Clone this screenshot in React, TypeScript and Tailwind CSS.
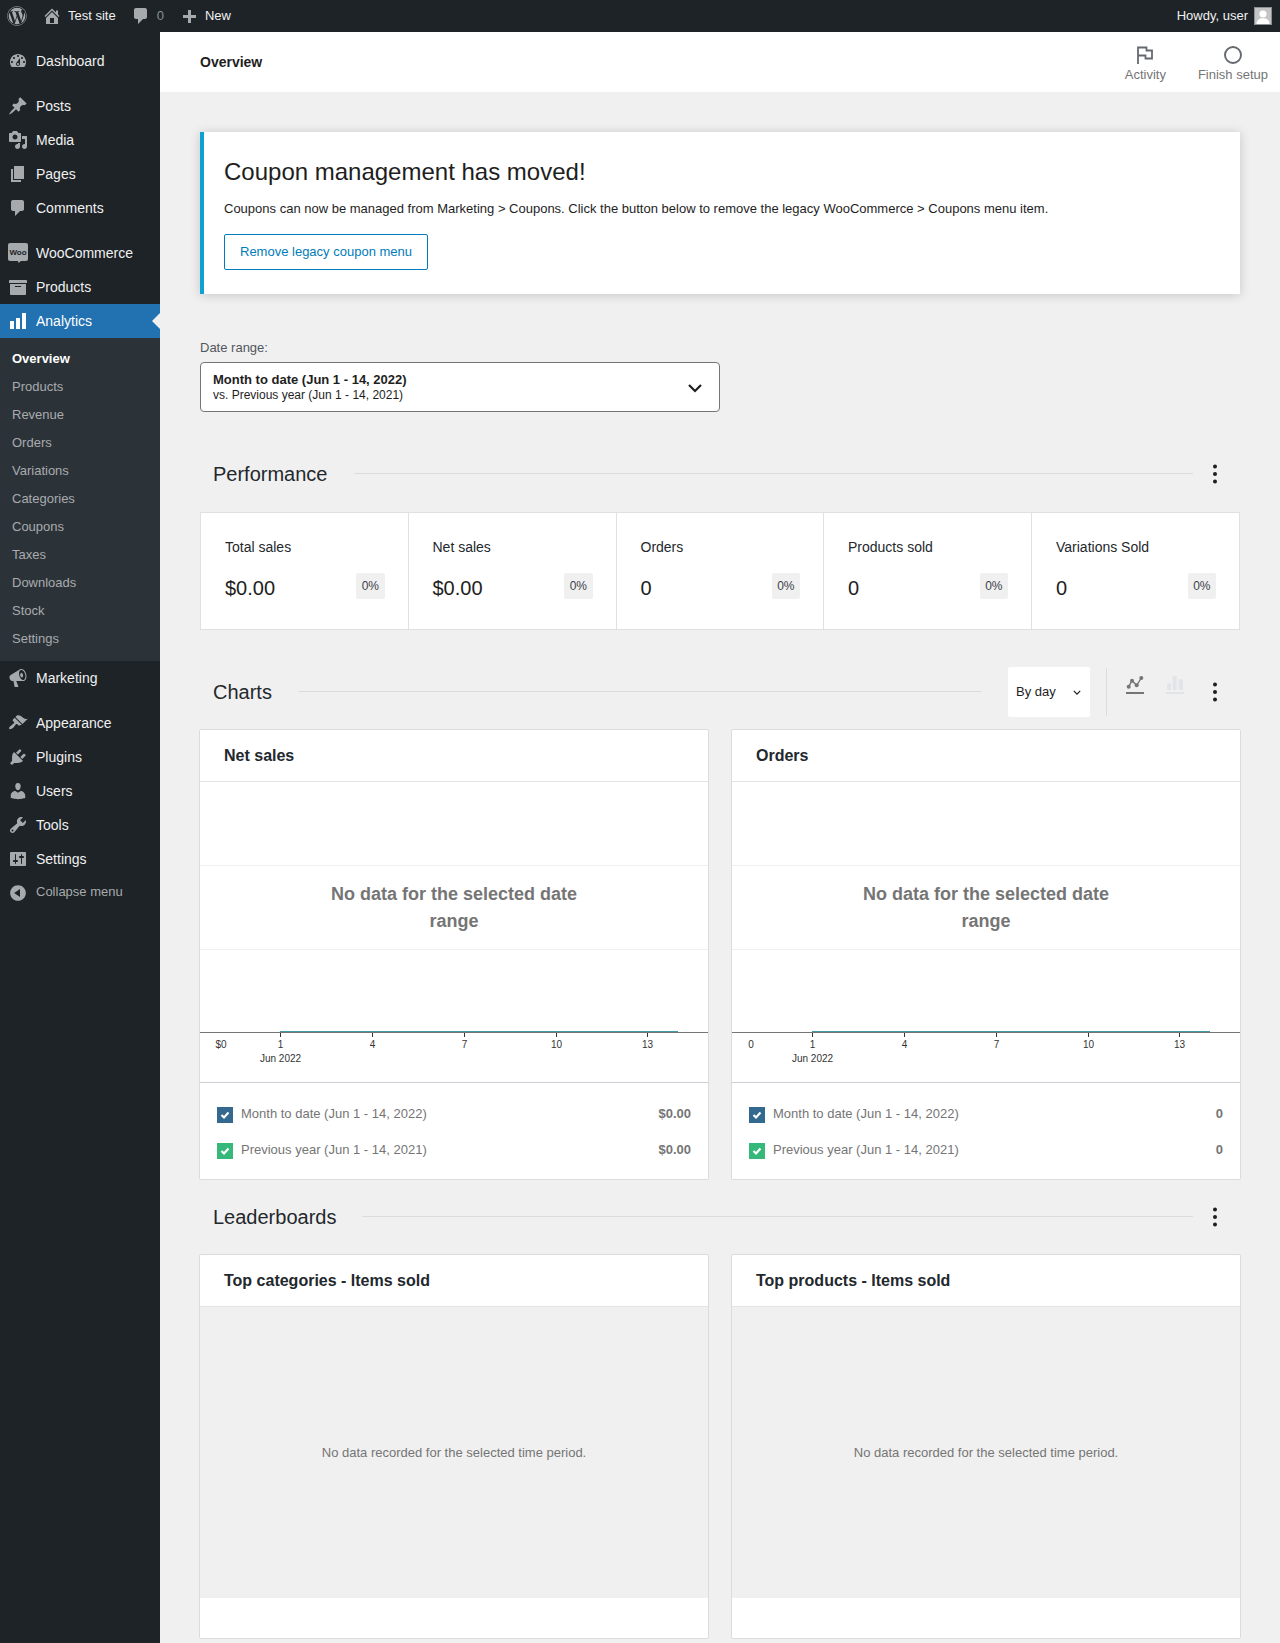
import React from "react";
import { FaWordpress } from "react-icons/fa";

const P: Record<string, string> = {
  dashboard: "M3.76 16h12.48c1.1-1.37 1.76-3.11 1.76-5 0-4.42-3.58-8-8-8s-8 3.58-8 8c0 1.89.66 3.63 1.76 5zM10 4c.55 0 1 .45 1 1s-.45 1-1 1-1-.45-1-1 .45-1 1-1zM6 6c.55 0 1 .45 1 1s-.45 1-1 1-1-.45-1-1 .45-1 1-1zm8 0c.55 0 1 .45 1 1s-.45 1-1 1-1-.45-1-1 .45-1 1-1zm-5.37 5.55L12 7v6c0 1.1-.9 2-2 2s-2-.9-2-2c0-.57.24-1.08.63-1.45zM4 10c.55 0 1 .45 1 1s-.45 1-1 1-1-.45-1-1 .45-1 1-1zm12 0c.55 0 1 .45 1 1s-.45 1-1 1-1-.45-1-1 .45-1 1-1zm-5 3c0-.55-.45-1-1-1s-1 .45-1 1 .45 1 1 1 1-.45 1-1z",
  post: "M10.44 3.02l1.82-1.82 6.36 6.35-1.83 1.82c-1.05-.68-2.48-.57-3.41.36l-.75.75c-.92.93-1.04 2.35-.35 3.41l-1.83 1.82-2.41-2.41-2.8 2.79c-.42.42-3.38 2.71-3.8 2.29s1.86-3.39 2.28-3.81l2.79-2.79L4.1 9.36l1.83-1.82c1.05.69 2.48.57 3.4-.36l.75-.75c.93-.92 1.05-2.35.36-3.41z",
  media: "M13 11V4c0-.55-.45-1-1-1h-1.67L9 1H5L3.67 3H2c-.55 0-1 .45-1 1v7c0 .55.45 1 1 1h10c.55 0 1-.45 1-1zM7 4.5c1.38 0 2.5 1.12 2.5 2.5S8.38 9.5 7 9.5 4.5 8.38 4.5 7 5.62 4.5 7 4.5zM14 6h5v10.5c0 1.38-1.12 2.5-2.5 2.5S14 17.88 14 16.5s1.12-2.5 2.5-2.5c.17 0 .34.02.5.05V9h-3V6zm-4 8.05V13h2v3.5c0 1.38-1.12 2.5-2.5 2.5S7 17.88 7 16.5 8.12 14 9.5 14c.17 0 .34.02.5.05z",
  page: "M6 15V2h10v13H6zm-1 1h8v2H3V5h2v11z",
  comment: "M5 2h9c1.1 0 2 .9 2 2v7c0 1.1-.9 2-2 2h-2l-5 5v-5H5c-1.1 0-2-.9-2-2V4c0-1.1.9-2 2-2z",
  archive: "M19 4v2H1V4c0-.55.45-1 1-1h16c.55 0 1 .45 1 1zM2 7h16v10c0 .55-.45 1-1 1H3c-.55 0-1-.45-1-1V7zm11 3V9H7v1h6z",
  bars: "M18 18V2h-4v16h4zm-6 0V7H8v11h4zm-6 0v-8H2v8h4z",
  megaphone: "M18.15 5.94c.46 1.62.38 3.22-.02 4.48-.42 1.28-1.26 2.18-2.3 2.48-.16.06-.26.06-.4.06-.06.02-.12.02-.18.02-.06.02-.14.02-.22.02h-6.8l2.22 5.5c.02.14-.06.26-.14.34-.08.1-.24.16-.34.16H6.95c-.1 0-.26-.06-.34-.16-.08-.08-.16-.2-.14-.34l-1-5.5H4.25l-.02-.02c-.5.06-1.08-.18-1.54-.62s-.88-1.08-1.06-1.88c-.24-.8-.2-1.56-.02-2.2.18-.62.58-1.08 1.06-1.3l.02-.02 9-5.4c.1-.06.18-.1.24-.16.06-.04.14-.08.24-.12.16-.08.28-.12.5-.18 1.04-.3 2.24.1 3.22 1 .98.88 1.8 2.24 2.26 3.86zm-2.58 5.98h-.02c.4-.1.74-.34 1.04-.7.58-.7.86-1.76.86-3.04 0-.64-.1-1.3-.28-1.98-.34-1.36-1.02-2.5-1.78-3.24s-1.68-1.1-2.46-.88c-.82.22-1.4.96-1.7 2-.32 1.04-.28 2.36.06 3.72.38 1.36 1 2.5 1.8 3.24.78.74 1.62 1.1 2.48.88zm-2.54-7.08c.22-.04.42-.02.62.04.38.16.76.48 1.02 1s.42 1.2.42 1.78c0 .3-.04.56-.12.8-.18.48-.44.84-.86.94-.34.1-.8-.06-1.14-.4-.28-.28-.52-.7-.66-1.2-.16-.5-.2-1-.14-1.44.08-.44.28-.82.58-1.1.1-.1.18-.16.28-.22.02-.02.06-.02.1-.04z",
  appearance: "M14.48 11.06L7.41 3.99l1.5-1.5c.5-.56 2.3-.47 3.51.32 1.21.8 1.43 1.28 2.91 2.1 1.18.64 2.45 1.26 4.45.85zm-.71.71L6.7 4.7 4.93 6.47c-.39.39-.39 1.02 0 1.41l1.06 1.06c.39.39.39 1.03 0 1.42-.6.6-1.43 1.11-2.21 1.69-.35.26-.7.53-1.01.84C1.43 13.23.78 15.5 1.29 16.01c.51.51 2.79-.14 4.13-1.49.31-.31.58-.66.84-1.01.58-.78 1.09-1.61 1.69-2.21.39-.39 1.02-.39 1.41 0l1.06 1.06c.39.39 1.02.39 1.41 0z",
  plugins: "M13.11 4.36L9.87 7.6 8 5.73l3.24-3.24c.35-.34 1.05-.2 1.56.32.52.51.66 1.21.31 1.55zm-8 1.77l.91-1.12 9.01 9.01-1.19.84c-.71.71-2.63 1.16-3.82 1.16H6.14L4.9 17.26c-.59.59-1.54.59-2.12 0-.59-.58-.59-1.53 0-2.12l1.24-1.24v-3.88c0-1.13.4-3.19 1.09-3.89zm7.26 3.97l3.24-3.24c.34-.35 1.04-.21 1.55.31.52.51.66 1.21.31 1.55l-3.24 3.25z",
  users: "M10 9.25c-2.27 0-2.73-3.44-2.73-3.44C7 4.02 7.82 2 9.97 2c2.16 0 2.98 2.02 2.71 3.81 0 0-.41 3.44-2.68 3.44zm0 2.57L12.72 10c2.39 0 4.52 2.33 4.52 4.53v2.49s-3.65 1.13-7.24 1.13c-3.65 0-7.24-1.13-7.24-1.13v-2.49c0-2.25 1.94-4.48 4.47-4.48z",
  tools: "M16.68 9.77c-1.34 1.34-3.3 1.67-4.95.99l-5.41 6.52c-.99.99-2.59.99-3.58 0s-.99-2.59 0-3.57l6.52-5.42c-.68-1.65-.35-3.61.99-4.95 1.28-1.28 3.12-1.62 4.72-1.06l-2.89 2.89 2.82 2.82 2.86-2.87c.53 1.58.18 3.39-1.08 4.65zM3.81 16.21c.4.39 1.04.39 1.43 0 .4-.4.4-1.04 0-1.43-.39-.4-1.03-.4-1.43 0-.39.39-.39 1.03 0 1.43z",
  settings: "M18 16V4c0-.55-.45-1-1-1H3c-.55 0-1 .45-1 1v12c0 .55.45 1 1 1h14c.55 0 1-.45 1-1zM8 11h1c.55 0 1 .45 1 1s-.45 1-1 1H8v1.5c0 .28-.22.5-.5.5s-.5-.22-.5-.5V13H6c-.55 0-1-.45-1-1s.45-1 1-1h1V5.5c0-.28.22-.5.5-.5s.5.22.5.5V11zm5-2h-1c-.55 0-1-.45-1-1s.45-1 1-1h1V5.5c0-.28.22-.5.5-.5s.5.22.5.5V7h1c.55 0 1 .45 1 1s-.45 1-1 1h-1v5.5c0 .28-.22.5-.5.5s-.5-.22-.5-.5V9z",
  collapse: "M10 2.16c4.33 0 7.84 3.51 7.84 7.84s-3.51 7.84-7.84 7.84S2.16 14.33 2.16 10 5.71 2.16 10 2.16zm2 11.72V6.12L6.18 9.97z",
  home: "M16 8.5l1.53 1.53-1.06 1.06L10 4.62l-6.47 6.47-1.06-1.06L10 2.5l4 4v-2h2v4zm-6-2.46l6 5.99V18H4v-5.97zM12 17v-5H8v5h4z",
  plus: "M17 7v3h-5v5H9v-5H4V7h5V2h3v5h5z",
};

function Dash({ name, className }: { name: string; className?: string }) {
  return (
    <svg viewBox="0 0 20 20" width={20} height={20} fill="currentColor" className={className}>
      <path d={P[name]} />
    </svg>
  );
}

function WooIcon() {
  return (
    <svg viewBox="0 0 20 20" width={20} height={20}>
      <path d="M2 0h16a2 2 0 0 1 2 2v14a2 2 0 0 1-2 2h-5l-2.5 2-.5-2H2a2 2 0 0 1-2-2V2a2 2 0 0 1 2-2z" fill="#a7aaad" />
      <text x="10" y="11.5" textAnchor="middle" fontSize="8" fontWeight="700" fill="#1d2327" fontFamily="Liberation Sans">Woo</text>
    </svg>
  );
}

function MenuItem({ icon, label, active }: { icon: React.ReactNode; label: string; active?: boolean }) {
  return (
    <div className={`relative flex h-[34px] items-center text-[14px] ${active ? "bg-[#2271b1] text-white" : "text-[#f0f0f1]"}`}>
      <span className={`flex w-[36px] shrink-0 justify-center ${active ? "text-white" : "text-[#a7aaad]"}`}>{icon}</span>
      <span>{label}</span>
      {active && (
        <span className="absolute right-0 top-1/2 h-0 w-0 -translate-y-1/2 border-y-[8px] border-r-[8px] border-y-transparent border-r-[#f0f0f0]" />
      )}
    </div>
  );
}

const subItems = ["Products", "Revenue", "Orders", "Variations", "Categories", "Coupons", "Taxes", "Downloads", "Stock", "Settings"];

function Sidebar() {
  return (
    <aside className="w-[160px] shrink-0 bg-[#1d2327] pt-[12px]">
      <MenuItem icon={<Dash name="dashboard" />} label="Dashboard" />
      <div className="h-[11px]" />
      <MenuItem icon={<Dash name="post" />} label="Posts" />
      <MenuItem icon={<Dash name="media" />} label="Media" />
      <MenuItem icon={<Dash name="page" />} label="Pages" />
      <MenuItem icon={<Dash name="comment" />} label="Comments" />
      <div className="h-[11px]" />
      <MenuItem icon={<WooIcon />} label="WooCommerce" />
      <MenuItem icon={<Dash name="archive" />} label="Products" />
      <MenuItem icon={<Dash name="bars" />} label="Analytics" active />
      <div className="bg-[#2c3338] pb-[8px] pt-[7px] text-[13px]">
        <div className="flex h-[28px] items-center pl-[12px] font-bold text-white">Overview</div>
        {subItems.map((s) => (
          <div key={s} className="flex h-[28px] items-center pl-[12px] text-[#a8abaf]">
            {s}
          </div>
        ))}
      </div>
      <MenuItem icon={<Dash name="megaphone" />} label="Marketing" />
      <div className="h-[11px]" />
      <MenuItem icon={<Dash name="appearance" />} label="Appearance" />
      <MenuItem icon={<Dash name="plugins" />} label="Plugins" />
      <MenuItem icon={<Dash name="users" />} label="Users" />
      <MenuItem icon={<Dash name="tools" />} label="Tools" />
      <MenuItem icon={<Dash name="settings" />} label="Settings" />
      <div className="flex h-[32px] items-center text-[13px] text-[#a7aaad]">
        <span className="flex w-[36px] shrink-0 justify-center pt-[2px]">
          <Dash name="collapse" />
        </span>
        <span>Collapse menu</span>
      </div>
    </aside>
  );
}

function TopBar() {
  return (
    <header className="flex h-[32px] items-center bg-[#1d2327] text-[13px] text-[#f0f0f1]">
      <FaWordpress className="ml-[7px] text-[#a7aaad]" size={20} />
      <Dash name="home" className="ml-[15px] text-[#a7aaad]" />
      <span className="ml-[6px]">Test site</span>
      <Dash name="comment" className="ml-[15px] text-[#a7aaad]" />
      <span className="ml-[6px] text-[#8c8f94]">0</span>
      <Dash name="plus" className="ml-[15px] mt-[3px] text-[#a7aaad]" />
      <span className="ml-[6px]">New</span>
      <span className="ml-auto">Howdy, user</span>
      <span className="ml-[6px] mr-[8px] flex h-[18px] w-[18px] items-end justify-center overflow-hidden border border-[#8c8f94] bg-[#c4c4c4]">
        <svg viewBox="0 0 16 16" width={16} height={16} fill="#fff">
          <circle cx="8" cy="6" r="3.6" />
          <path d="M1.5 16c0-4 2.6-5.8 6.5-5.8s6.5 1.8 6.5 5.8z" />
        </svg>
      </span>
    </header>
  );
}

function Kebab({ className }: { className?: string }) {
  return (
    <svg viewBox="0 0 20 20" width={20} height={20} fill="#1e1e1e" className={className}>
      <circle cx="10" cy="2.4" r="2" />
      <circle cx="10" cy="10" r="2" />
      <circle cx="10" cy="17.6" r="2" />
    </svg>
  );
}

function SectionHead({ title }: { title: string }) {
  return (
    <div className="flex h-[40px] items-center pl-[13px]">
      <h2 className="text-[20px] font-normal text-[#23282d]">{title}</h2>
      <div className="ml-[26px] mt-[-1px] h-[1px] flex-1 bg-[#dcdcde]" />
      <Kebab className="ml-[12px] mr-[15px]" />
    </div>
  );
}

function Stat({ label, value, last }: { label: string; value: string; last?: boolean }) {
  return (
    <div className={`h-[116px] pl-[24px] pr-[23px] pt-[24px] ${last ? "" : "border-r border-[#e0e0e0]"}`}>
      <div className="flex h-[20px] items-center text-[14px] text-[#23282d]">{label}</div>
      <div className="mt-[16px] flex h-[26px] items-center justify-between">
        <span className="mt-[3px] text-[20px] text-[#1e1e1e]">{value}</span>
        <span className="flex h-[26px] items-center rounded-[2px] bg-[#f0f0f0] px-[5.5px] text-[12px] text-[#3c434a]">0%</span>
      </div>
    </div>
  );
}

const ticks: [number, string][] = [
  [80.5, "1"],
  [172.5, "4"],
  [264.5, "7"],
  [356.5, "10"],
  [447.5, "13"],
];

function ChartDrawing({ yLabel, yX }: { yLabel: string; yX: number }) {
  return (
    <svg width="508" height="300" viewBox="0 0 508 300" className="block" fontFamily="Liberation Sans" fontSize="10" fill="#333">
      <line x1="0" x2="508" y1="83.5" y2="83.5" stroke="#efefef" />
      <line x1="0" x2="508" y1="167.5" y2="167.5" stroke="#efefef" />
      <line x1="80" x2="478" y1="249.5" y2="249.5" stroke="#3f9aa8" />
      <line x1="0" x2="508" y1="250.5" y2="250.5" stroke="#757575" />
      {ticks.map(([x, t]) => (
        <g key={t}>
          <line x1={x} x2={x} y1="251" y2="255" stroke="#333" />
          <text x={x} y="265.5" textAnchor="middle">{t}</text>
        </g>
      ))}
      <text x={yX} y="265.5" textAnchor="middle">{yLabel}</text>
      <text x="80.5" y="279.5" textAnchor="middle">Jun 2022</text>
    </svg>
  );
}

function Check({ color }: { color: string }) {
  return (
    <span className="flex h-[16px] w-[16px] items-center justify-center" style={{ backgroundColor: color }}>
      <svg viewBox="0 0 16 16" width={16} height={16} fill="none" stroke="#fff" strokeWidth="2.2">
        <path d="M4.5 8l2.5 2.5 4.5-5" />
      </svg>
    </span>
  );
}

function ChartCard({ title, yLabel, yX, val }: { title: string; yLabel: string; yX: number; val: string }) {
  return (
    <div className="h-[451px] rounded-[2px] border border-[#dcdcde] bg-white">
      <div className="flex h-[52px] items-center border-b border-[#e2e4e7] pl-[24px] text-[16px] font-bold text-[#23282d]">{title}</div>
      <div className="relative h-[300px]">
        <ChartDrawing yLabel={yLabel} yX={yX} />
        <div className="absolute left-0 right-0 top-[99px] text-center text-[18px] font-bold leading-[27px] text-[#757575]">
          No data for the selected date
          <br />
          range
        </div>
      </div>
      <div className="h-[97px] border-t border-[#ccd0d4] px-[17px] pt-[14px] text-[13px] text-[#757575]">
        {[
          ["#33688f", "Month to date (Jun 1 - 14, 2022)"],
          ["#37b87b", "Previous year (Jun 1 - 14, 2021)"],
        ].map(([c, t]) => (
          <div key={t} className="flex h-[36px] items-center">
            <Check color={c} />
            <span className="mb-[3px] ml-[8px]">{t}</span>
            <span className="mb-[3px] ml-auto font-bold">{val}</span>
          </div>
        ))}
      </div>
    </div>
  );
}

function BoardCard({ title }: { title: string }) {
  return (
    <div className="h-[385px] rounded-[2px] border border-[#dcdcde] bg-white">
      <div className="flex h-[52px] items-center border-b border-[#e2e4e7] pl-[24px] text-[16px] font-bold text-[#23282d]">{title}</div>
      <div className="flex h-[291px] items-center justify-center bg-[#f0f0f0] text-[13px] text-[#757575]">
        No data recorded for the selected time period.
      </div>
    </div>
  );
}

function Main() {
  return (
    <main className="min-w-0 flex-1 bg-[#f0f0f0]">
      <div className="flex h-[60px] items-center justify-between bg-white pl-[40px] pr-[12px]">
        <h1 className="text-[14px] font-bold text-[#1e1e1e]">Overview</h1>
        <div className="flex gap-[32px] pt-[6px] text-[13px] text-[#757575]">
          <div className="flex flex-col items-center">
            <svg viewBox="0 0 18 18" width={18} height={18} fill="none" stroke="#646970" strokeWidth="1.8" className="mb-[2px]">
              <path d="M2 18V1.5h8.5v3h5.5v8h-6.5v-3H2" />
            </svg>
            <span className="leading-[18px]">Activity</span>
          </div>
          <div className="flex flex-col items-center">
            <svg viewBox="0 0 18 18" width={18} height={18} fill="none" stroke="#646970" strokeWidth="1.9" className="mb-[2px]">
              <circle cx="9" cy="9" r="8" />
            </svg>
            <span className="leading-[18px]">Finish setup</span>
          </div>
        </div>
      </div>

      <div className="px-[40px] pb-[4px] pt-[40px]">
        <section className="h-[162px] border-l-4 border-[#11a0d2] bg-white pl-[20px] pt-[24px] shadow-[0_1px_10px_rgba(0,0,0,0.18)]">
          <h3 className="text-[24px] leading-[32px] text-[#1e1e1e]">Coupon management has moved!</h3>
          <p className="mt-[11px] text-[13px] leading-[20px] text-[#1e1e1e]">
            Coupons can now be managed from Marketing &gt; Coupons. Click the button below to remove the legacy WooCommerce &gt; Coupons menu item.
          </p>
          <button className="mt-[15px] h-[36px] rounded-[2px] border border-[#007cba] bg-white px-[15px] text-[13px] text-[#007cba]">Remove legacy coupon menu</button>
        </section>

        <div className="mt-[44px] h-[20px] text-[13px] leading-[20px] text-[#50575e]">Date range:</div>
        <div className="mt-[4px] flex h-[50px] w-[520px] items-center justify-between rounded-[4px] border border-[#757575] bg-white pl-[12px] pr-[16px]">
          <div>
            <div className="text-[13px] font-bold leading-[16px] text-[#1e1e1e]">Month to date (Jun 1 - 14, 2022)</div>
            <div className="text-[12px] leading-[14px] text-[#1e1e1e]">vs. Previous year (Jun 1 - 14, 2021)</div>
          </div>
          <svg viewBox="0 0 16 10" width={16} height={10} fill="none" stroke="#1e1e1e" strokeWidth="2.2" className="mt-[2px]">
            <path d="M2 2l6 6 6-6" />
          </svg>
        </div>

        <div className="mt-[42px]">
          <SectionHead title="Performance" />
        </div>
        <div className="mt-[18px] grid grid-cols-[207.5px_208px_207.5px_208px_1fr] border border-[#e0e0e0] bg-white">
          <Stat label="Total sales" value="$0.00" />
          <Stat label="Net sales" value="$0.00" />
          <Stat label="Orders" value="0" />
          <Stat label="Products sold" value="0" />
          <Stat label="Variations Sold" value="0" last />
        </div>

        <div className="mt-[37px] flex h-[50px] items-center pl-[13px]">
          <h2 className="text-[20px] font-normal text-[#23282d]">Charts</h2>
          <div className="ml-[26px] mt-[-1px] h-[1px] flex-1 bg-[#dcdcde]" />
          <div className="ml-[26px] flex h-[50px] w-[82px] items-center justify-between rounded-[2px] bg-white pl-[8px] pr-[9px] text-[13px] text-[#1e1e1e]">
            <span>By day</span>
            <svg viewBox="0 0 10 6" width={8} height={5} fill="none" stroke="#1e1e1e" strokeWidth="1.5">
              <path d="M1 1l4 4 4-4" />
            </svg>
          </div>
          <div className="ml-[16px] h-[48px] w-[1px] bg-[#dcdcde]" />
          <svg viewBox="0 0 18 18" width={18} height={18} className="ml-[19px] mt-[-14px]" fill="#757575">
            <path d="M2.7 10.7L6 4.7l4.7 4.6L15.3 2" fill="none" stroke="#757575" strokeWidth="1.4" />
            <circle cx="2.7" cy="10.7" r="2" />
            <circle cx="6" cy="4.7" r="2" />
            <circle cx="10.7" cy="9.3" r="2" />
            <circle cx="15.3" cy="2" r="2" />
            <rect x="0" y="16" width="18" height="2" />
          </svg>
          <svg viewBox="0 0 18 18" width={18} height={18} className="ml-[22px] mt-[-14px]" fill="#e2e4e7">
            <rect x="1" y="7.3" width="4" height="6.7" />
            <rect x="6.7" y="0" width="4" height="14" />
            <rect x="12.7" y="3.3" width="4.3" height="10.7" />
            <rect x="0" y="16" width="18" height="2" />
          </svg>
          <Kebab className="ml-[21px] mr-[15px]" />
        </div>

        <div className="-mx-[1px] mt-[12px] grid grid-cols-2 gap-[22px]">
          <ChartCard title="Net sales" yLabel="$0" yX={21} val="$0.00" />
          <ChartCard title="Orders" yLabel="0" yX={19} val="0" />
        </div>

        <div className="mt-[17px]">
          <SectionHead title="Leaderboards" />
        </div>
        <div className="-mx-[1px] mt-[17px] grid grid-cols-2 gap-[22px]">
          <BoardCard title="Top categories - Items sold" />
          <BoardCard title="Top products - Items sold" />
        </div>
      </div>
    </main>
  );
}

export default function App() {
  return (
    <div className="flex min-h-[1643px] flex-col [font-family:'Liberation_Sans',sans-serif]">
      <TopBar />
      <div className="flex flex-1">
        <Sidebar />
        <Main />
      </div>
    </div>
  );
}
